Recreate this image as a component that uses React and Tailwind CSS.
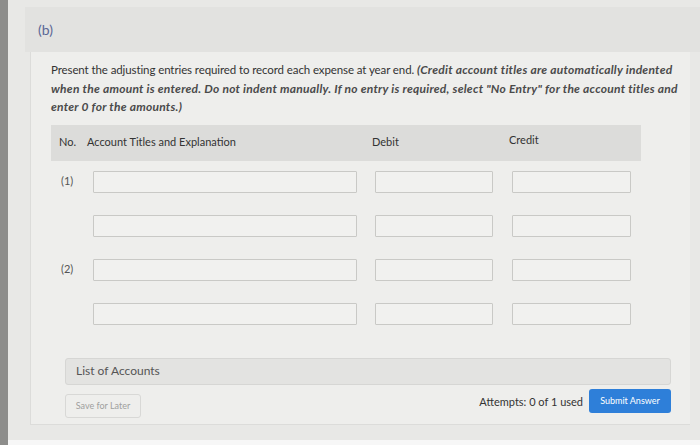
import React from 'react';

const Field = ({ w }) => (
  <div className={`${w} h-[22px] bg-[#f1f1ef] border border-[#c9c9c6] rounded-[1px]`} />
);

const EntryRow = ({ label }) => (
  <div className="flex items-center h-[22px]">
    <div className="w-[42px] pl-[10px] text-[11px] text-[#555]">{label}</div>
    <Field w="w-[264px]" />
    <div className="w-[18px]" />
    <Field w="w-[118px]" />
    <div className="w-[19px]" />
    <Field w="w-[119px]" />
  </div>
);

const App = () => {
  return (
    <div
      className="w-[700px] h-[445px] flex overflow-hidden bg-[#e8e8e6] text-[#3a3a3a]"
      style={{ fontFamily: 'Lato, "Open Sans", sans-serif' }}
    >
      {/* left edge of the monitor */}
      <div className="w-[8px] bg-[#8d8d8b]" />

      <div className="flex-1 flex flex-col pt-[7px] pl-[17px]">
        {/* part header */}
        <div className="h-[45px] bg-[#e2e2e0] flex items-center pl-[13px]">
          <span className="text-[14px] text-[#5b6796]">(b)</span>
        </div>

        {/* question body */}
        <div className="ml-[5px] mr-[10px] h-[373px] bg-[#eeeeec] border-l border-b border-[#dcdcda] pl-[20px] pt-[9px]">
          <p className="w-[628px] text-[11.5px] leading-[18.5px] tracking-[-0.1px] text-[#333]">
            Present the adjusting entries required to record each expense at year end.{' '}
            <span className="italic font-bold text-[12px] tracking-[0.25px] text-[#4a4a4a]">
              (Credit account titles are automatically indented when the amount is entered. Do not indent manually. If no entry is required, select "No Entry" for the account titles and enter 0 for the amounts.)
            </span>
          </p>

          {/* entries table */}
          <div className="mt-[8px] w-[590px] h-[36px] bg-[#dcdcda] flex items-center text-[11px] text-[#333]">
            <div className="w-[36px] pl-[8px]">No.</div>
            <div className="w-[285px]">Account Titles and Explanation</div>
            <div className="w-[137px]">Debit</div>
            <div className="-mt-[4px]">Credit</div>
          </div>

          <div className="mt-[10px] flex flex-col gap-[22px]">
            <EntryRow label="(1)" />
            <EntryRow label="" />
            <EntryRow label="(2)" />
            <EntryRow label="" />
          </div>

          {/* list of accounts */}
          <div className="mt-[33px] ml-[14px] w-[606px] h-[27px] bg-[#e3e3e1] border border-[#d6d6d4] rounded-[3px] flex items-center pl-[10px]">
            <span className="text-[12px] text-[#555]">List of Accounts</span>
          </div>

          <div className="mt-[4px] ml-[14px] w-[606px] flex items-start">
            <button className="mt-[5px] w-[76px] h-[24px] border border-[#d8d8d6] rounded-[3px] text-[9px] text-[#a0a09e]">
              Save for Later
            </button>
            <div className="flex-1" />
            <span className="mt-[5px] text-[11px] text-[#333] mr-[6px]">Attempts: 0 of 1 used</span>
            <button className="w-[82px] h-[24px] bg-[#2e7fd9] rounded-[3px] text-[9px] text-white">
              Submit Answer
            </button>
          </div>
        </div>

        <div className="flex-1" />
        <div className="h-[5px] bg-[#f7f7f7] -ml-[17px]" />
      </div>
    </div>
  );
};

export default App;
